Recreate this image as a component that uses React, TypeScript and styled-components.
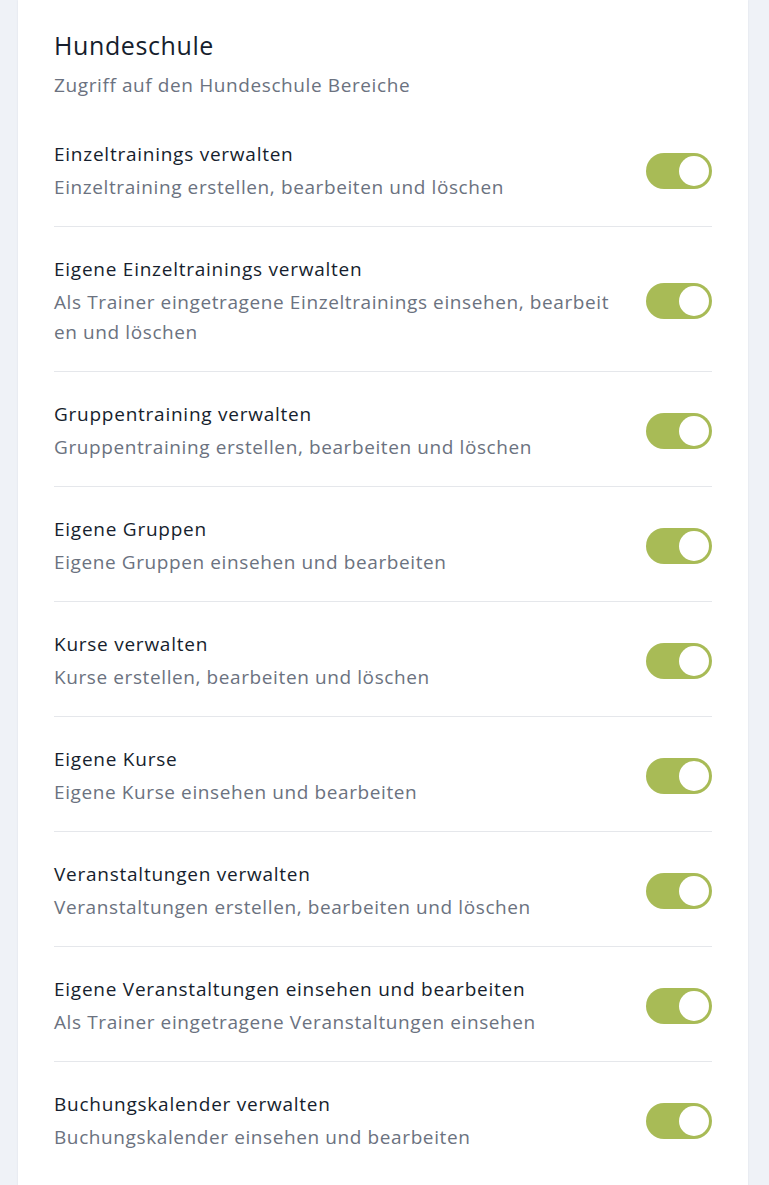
import React, { useState } from "react";
import styled, { createGlobalStyle } from "styled-components";

const GlobalStyle = createGlobalStyle`
  html, body {
    margin: 0;
    padding: 0;
    background: #eff2f7;
  }
  body {
    font-family: "Open Sans", "Noto Sans", sans-serif;
    -webkit-font-smoothing: antialiased;
  }
`;

const Page = styled.div`
  padding: 0 21px 0 18px;
  min-height: 1185px;
  display: flex;
`;

const Card = styled.section`
  flex: 1;
  background: #ffffff;
  box-shadow: 0 0 2px rgba(30, 41, 59, 0.08);
  padding: 29px 36px 24px 36px;
`;

const Title = styled.h2`
  margin: 0;
  font-size: 25px;
  line-height: 32px;
  letter-spacing: 0.6px;
  font-weight: 400;
  color: #161e2d;
`;

const Subtitle = styled.p`
  margin: 9px 0 11px 0;
  font-size: 19px;
  line-height: 30px;
  letter-spacing: 0.6px;
  color: #6b7280;
`;

const List = styled.div`
  display: flex;
  flex-direction: column;
`;

const Row = styled.div`
  display: flex;
  align-items: center;
  gap: 32px;
  padding: 28px 0 24px 0;
  border-top: 1px solid #e5e7eb;
  &:first-child {
    border-top: 1px solid transparent;
  }
`;

const Text = styled.div`
  flex: 1;
  min-width: 0;
`;

const RowTitle = styled.div`
  font-size: 19px;
  line-height: 28px;
  letter-spacing: 0.75px;
  color: #161e2d;
`;

const RowDesc = styled.div`
  margin-top: 4px;
  font-size: 19px;
  line-height: 30px;
  letter-spacing: 0.6px;
  color: #6b7280;
  word-break: break-all;
`;

const Track = styled.button<{ $on: boolean }>`
  flex: none;
  position: relative;
  width: 66px;
  height: 36px;
  border: none;
  padding: 0;
  border-radius: 18px;
  background: ${(p) => (p.$on ? "#a8bb56" : "#d1d5db")};
  cursor: pointer;
`;

const Knob = styled.span<{ $on: boolean }>`
  position: absolute;
  top: 3px;
  left: ${(p) => (p.$on ? "33px" : "3px")};
  width: 30px;
  height: 30px;
  border-radius: 50%;
  background: #ffffff;
  transition: left 0.15s ease;
`;

type Item = { title: string; desc: string };

const items: Item[] = [
  { title: "Einzeltrainings verwalten", desc: "Einzeltraining erstellen, bearbeiten und löschen" },
  {
    title: "Eigene Einzeltrainings verwalten",
    desc: "Als Trainer eingetragene Einzeltrainings einsehen, bearbeiten und löschen",
  },
  { title: "Gruppentraining verwalten", desc: "Gruppentraining erstellen, bearbeiten und löschen" },
  { title: "Eigene Gruppen", desc: "Eigene Gruppen einsehen und bearbeiten" },
  { title: "Kurse verwalten", desc: "Kurse erstellen, bearbeiten und löschen" },
  { title: "Eigene Kurse", desc: "Eigene Kurse einsehen und bearbeiten" },
  { title: "Veranstaltungen verwalten", desc: "Veranstaltungen erstellen, bearbeiten und löschen" },
  {
    title: "Eigene Veranstaltungen einsehen und bearbeiten",
    desc: "Als Trainer eingetragene Veranstaltungen einsehen",
  },
  { title: "Buchungskalender verwalten", desc: "Buchungskalender einsehen und bearbeiten" },
];

const Toggle: React.FC = () => {
  const [on, setOn] = useState(true);
  return (
    <Track $on={on} role="switch" aria-checked={on} onClick={() => setOn(!on)}>
      <Knob $on={on} />
    </Track>
  );
};

export default function App() {
  return (
    <>
      <GlobalStyle />
      <Page>
        <Card>
          <Title>Hundeschule</Title>
          <Subtitle>Zugriff auf den Hundeschule Bereiche</Subtitle>
          <List>
            {items.map((it) => (
              <Row key={it.title}>
                <Text>
                  <RowTitle>{it.title}</RowTitle>
                  <RowDesc>{it.desc}</RowDesc>
                </Text>
                <Toggle />
              </Row>
            ))}
          </List>
        </Card>
      </Page>
    </>
  );
}
